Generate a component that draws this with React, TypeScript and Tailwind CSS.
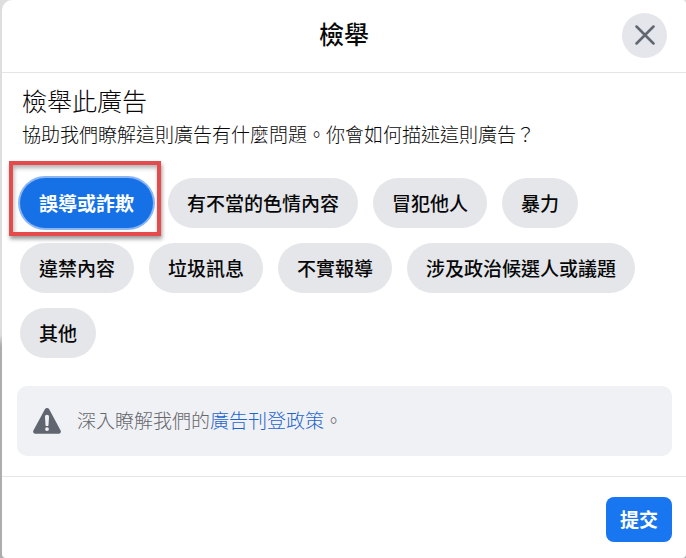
import React, { useState } from 'react';

const reasons = [
    '誤導或詐欺',
    '有不當的色情內容',
    '冒犯他人',
    '暴力',
    '違禁內容',
    '垃圾訊息',
    '不實報導',
    '涉及政治候選人或議題',
    '其他',
];

const CloseIcon: React.FC = () => (
    <svg viewBox="0 0 20 20" className="w-5 h-5" fill="none" stroke="#606770" strokeWidth="2.5" strokeLinecap="round" aria-hidden="true">
        <path d="M1.5 1.5 18.5 18.5M18.5 1.5 1.5 18.5" />
    </svg>
);

const WarningIcon: React.FC = () => (
    <svg viewBox="0 0 28 26" className="w-7 h-[26px] shrink-0" aria-hidden="true">
        <path
            fill="#606570"
            d="M11.9 1.3a2.5 2.5 0 0 1 4.3 0L27.6 22.6a2.1 2.1 0 0 1-1.9 3.1H2.3a2.1 2.1 0 0 1-1.9-3.1z"
        />
        <path fill="#f0f2f5" d="M14 6.8c1.2 0 2.1.9 2 2.1l-.5 8c0 1.6-3 1.6-3 0l-.5-8c-.1-1.2.8-2.1 2-2.1z" />
        <circle cx="14" cy="21.1" r="1.9" fill="#f0f2f5" />
    </svg>
);

const App: React.FC = () => {
    const [selected, setSelected] = useState(reasons[0]);

    return (
        <div className="min-h-screen pl-0.5 bg-linear-to-b from-[#dedede] from-60% to-[#adadad] to-62% font-['Noto_Sans_CJK_TC','Noto_Sans',sans-serif] text-[19px] leading-7 text-[#080809]">
            <div role="dialog" aria-labelledby="dialog-title" className="flex flex-col min-h-screen rounded-sm rounded-tl-[10px] bg-white">
                <header className="grid grid-cols-[1fr_auto_1fr] items-center h-[73px] px-[19px] pb-0.5 border-b border-[#e4e5e7]">
                    <h1 id="dialog-title" className="col-start-2 pb-1 text-[25px] leading-8 font-medium">檢舉</h1>
                    <button type="button" aria-label="關閉" className="justify-self-end flex items-center justify-center w-[45px] h-[45px] rounded-full bg-[#e4e6eb]">
                        <CloseIcon />
                    </button>
                </header>

                <main className="flex flex-col pl-[15px] pr-[14px] pt-[11px] pb-5">
                    <div className="px-[5px]">
                        <h2 className="text-[25px] leading-8 font-light">檢舉此廣告</h2>
                        <p className="mt-1 font-light">協助我們瞭解這則廣告有什麼問題。你會如何描述這則廣告？</p>
                    </div>

                    <div className="flex flex-wrap gap-[15px] mt-[30px] pl-[3px]">
                        {reasons.map((reason) => (
                            <div key={reason} className="relative">
                                <button
                                    type="button"
                                    aria-pressed={selected === reason}
                                    onClick={() => setSelected(reason)}
                                    className={
                                        selected === reason
                                            ? 'h-[50px] px-[19px] rounded-full font-bold text-white bg-[#1771e6] ring-2 ring-[#8bb6f5]'
                                            : 'h-[50px] px-[19px] rounded-full font-medium bg-[#e4e6ea]'
                                    }
                                >
                                    {reason}
                                </button>
                                {/* red highlight around the first reason */}
                                {reason === reasons[0] && (
                                    <div className="absolute -top-[17px] -bottom-2 -left-[11px] -right-2 border-4 border-[#e54b4d] shadow-[1px_3px_4px_rgba(0,0,0,0.4),inset_1px_3px_4px_rgba(0,0,0,0.3)] pointer-events-none" />
                                )}
                            </div>
                        ))}
                    </div>

                    <div className="flex items-center gap-4 mt-7 h-[70px] px-4 rounded-[10px] bg-[#f0f1f5]">
                        <WarningIcon />
                        <p className="pb-0.5 font-light text-[#65676b]">
                            深入瞭解我們的<a href="#policy" className="text-[#1c64cc]">廣告刊登政策</a>。
                        </p>
                    </div>
                </main>

                <footer className="flex justify-end pt-5 pb-4 pr-[14px] border-t border-[#e4e5e7]">
                    <button type="button" className="h-[45px] px-[14px] pb-0.5 rounded-lg font-bold text-white bg-[#1876f0]">提交</button>
                </footer>
            </div>
        </div>
    );
};

export default App;
